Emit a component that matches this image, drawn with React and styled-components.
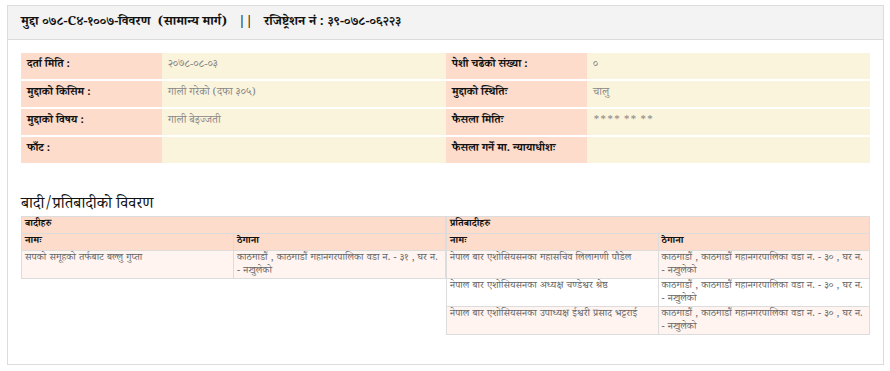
import React from "react";
import styled, { createGlobalStyle } from "styled-components";

const Global = createGlobalStyle`
  html, body { margin: 0; padding: 0; background: #fff; }
  body {
    font-family: "Noto Serif Devanagari", "Noto Sans Devanagari", "Lohit Devanagari", "Liberation Serif", serif;
    color: #222;
  }
`;

const Panel = styled.div`
  margin: 5px 6px 0 7px;
  width: 877px;
  height: 360px;
  box-sizing: border-box;
  border: 1px solid #dcdcdc;
  background: #fff;
`;

const Header = styled.div`
  height: 34px;
  box-sizing: border-box;
  background: #f3f3f3;
  border-bottom: 1px solid #dcdcdc;
  display: flex;
  align-items: center;
  padding: 0 13px;
  font-size: 13px;
  font-weight: 700;
  color: #111;
  white-space: pre;
`;

const Body = styled.div`
  padding: 13px 13px 0 13px;
`;

const InfoGrid = styled.div`
  display: grid;
  grid-template-columns: 141px 284px 141px 283px;
  grid-auto-rows: 26px;
  row-gap: 2px;
`;

const Cell = styled.div`
  background: ${(p) => (p.$label ? "#fddccc" : "#fbf4dc")};
  font-size: 11px;
  line-height: 14px;
  font-weight: ${(p) => (p.$label ? 700 : 400)};
  color: ${(p) => (p.$label ? "#111" : "#888")};
  padding: 6px 0 0 6px;
  box-sizing: border-box;
`;

const Heading = styled.h3`
  margin: 33px 0 0 0;
  font-size: 16px;
  font-weight: 400;
  color: #111;
  line-height: 20px;
`;

const Parties = styled.div`
  display: grid;
  grid-template-columns: 425px 424px;
  align-items: start;
`;

const Table = styled.table`
  width: 100%;
  border-collapse: collapse;
  font-size: 10px;
  table-layout: fixed;
`;

const HeadTh = styled.th`
  background: #fddccc;
  border: 1px solid #dcdcdc;
  text-align: left;
  font-weight: 700;
  padding: 0 3px;
  height: 17px;
  line-height: 16px;
  box-sizing: border-box;
  color: #111;
`;

const Td = styled.td`
  background: ${(p) => (p.$odd ? "#fff4f0" : "#fff")};
  border: 1px solid #dcdcdc;
  vertical-align: top;
  padding: 1px 3px 0;
  height: 28px;
  box-sizing: border-box;
  color: #666;
  line-height: 13px;
  word-spacing: 0.6px;
`;

const info = [
  ["दर्ता मिति :", "२०७८-०८-०३", "पेशी चढेको संख्या :", "०"],
  ["मुद्दाको किसिम :", "गाली गरेको (दफा ३०५)", "मुद्दाको स्थितिः", "चालु"],
  ["मुद्दाको विषय :", "गाली बेइज्जती", "फैसला मितिः", "**** ** **"],
  ["फाँट :", "", "फैसला गर्ने मा. न्यायाधीशः", ""],
];

const addr = "काठमाडौं , काठमाडौं महानगरपालिका वडा न. - ३० , घर न. -\u00a0नखुलेको";

const PartyTable = ({ title, rows }) => (
  <Table>
    <colgroup>
      <col style={{ width: "50%" }} />
      <col style={{ width: "50%" }} />
    </colgroup>
    <thead>
      <tr>
        <HeadTh colSpan={2}>{title}</HeadTh>
      </tr>
      <tr>
        <HeadTh>नामः</HeadTh>
        <HeadTh>ठेगाना</HeadTh>
      </tr>
    </thead>
    <tbody>
      {rows.map((r, i) => (
        <tr key={i}>
          <Td $odd={i % 2 === 0}>{r[0]}</Td>
          <Td $odd={i % 2 === 0}>{r[1]}</Td>
        </tr>
      ))}
    </tbody>
  </Table>
);

export default function App() {
  return (
    <>
      <Global />
      <Panel>
        <Header>{"मुद्दा ०७८-C४-१००७-विवरण  (सामान्य मार्ग)   ||   रजिष्ट्रेशन नं : ३९-०७८-०६२२३"}</Header>
        <Body>
          <InfoGrid>
            {info.map((r, i) => (
              <React.Fragment key={i}>
                <Cell $label>{r[0]}</Cell>
                <Cell>{r[1]}</Cell>
                <Cell $label>{r[2]}</Cell>
                <Cell>{r[3]}</Cell>
              </React.Fragment>
            ))}
          </InfoGrid>
          <Heading>बादी/प्रतिबादीको विवरण</Heading>
          <Parties>
            <PartyTable
              title="बादीहरु"
              rows={[["सपको समूहको तर्फबाट बल्लु गुप्ता", "काठमाडौं , काठमाडौं महानगरपालिका वडा न. - ३१ , घर न. -\u00a0नखुलेको"]]}
            />
            <PartyTable
              title="प्रतिबादीहरु"
              rows={[
                ["नेपाल बार एशोसियसनका महासचिव लिलामणी पौडेल", addr],
                ["नेपाल बार एशोसियसनका अध्यक्ष चण्डेश्वर श्रेष्ठ", addr],
                ["नेपाल बार एशोसियसनका उपाध्यक्ष ईश्वरी प्रसाद भट्टराई", addr],
              ]}
            />
          </Parties>
        </Body>
      </Panel>
    </>
  );
}
